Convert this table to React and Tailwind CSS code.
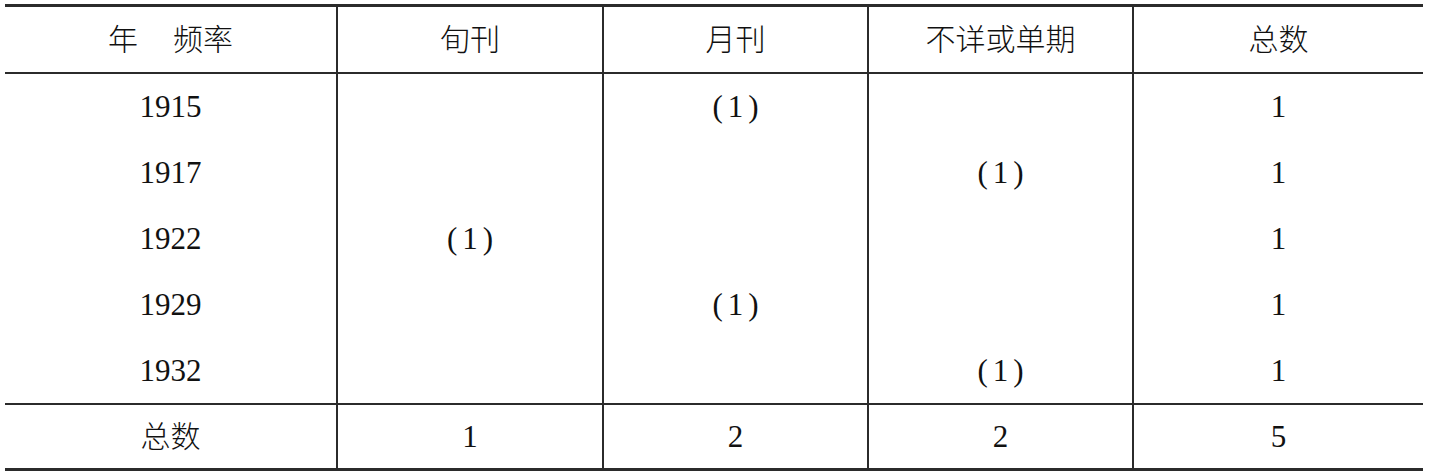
import React from 'react';

const COL_W = ['w-[331px]', 'w-[266px]', 'w-[265px]', 'w-[265px]', 'w-[291px]'];

const years = ['1915', '1917', '1922', '1929', '1932'];

// body cells per column (besides the year column)
const body = [
    ['', '', 'p', '', ''],
    ['p', '', '', 'p', ''],
    ['', 'p', '', '', 'p'],
    ['1', '1', '1', '1', '1'],
];

function Paren() {
    return (
        <span className="inline-flex items-center">
            <span>(</span>
            <span className="mx-[5px]">1</span>
            <span>)</span>
        </span>
    );
}

function Cell({ col, className = '', children }) {
    return (
        <div
            className={`${COL_W[col]} shrink-0 flex items-center justify-center ${col > 0 ? 'border-l-2 border-[#2b2b2b]' : ''} ${className}`}
        >
            {children}
        </div>
    );
}

export default function App() {
    return (
        <div
            className="w-[1430px] h-[476px] bg-white text-[#111] pt-[4px] pl-[5px]"
            style={{ fontFamily: '"Liberation Serif", "Noto Sans CJK SC", serif' }}
        >
            <div className="w-[1418px] border-t-[3px] border-b-[3px] border-[#2b2b2b] text-[31px] leading-none">
                {/* header */}
                <div className="flex h-[67px] border-b-2 border-[#2b2b2b] text-[30px] font-light">
                    <Cell col={0}>
                        <span>年</span>
                        <span className="w-[35px]" />
                        <span>频率</span>
                    </Cell>
                    <Cell col={1}>旬刊</Cell>
                    <Cell col={2}>月刊</Cell>
                    <Cell col={3}>不详或单期</Cell>
                    <Cell col={4}>总数</Cell>
                </div>

                {/* body */}
                <div className="flex h-[331px] border-b-2 border-[#2b2b2b]">
                    <div className={`${COL_W[0]} shrink-0 flex flex-col`}>
                        {years.map((y) => (
                            <div key={y} className="flex-1 flex items-center justify-center">{y}</div>
                        ))}
                    </div>
                    {body.map((col, ci) => (
                        <div
                            key={ci}
                            className={`${COL_W[ci + 1]} shrink-0 flex flex-col border-l-2 border-[#2b2b2b]`}
                        >
                            {col.map((v, ri) => (
                                <div key={ri} className="flex-1 flex items-center justify-center">
                                    {v === 'p' ? <Paren /> : v}
                                </div>
                            ))}
                        </div>
                    ))}
                </div>

                {/* totals */}
                <div className="flex h-[63px]">
                    <Cell col={0} className="text-[30px] font-light">总数</Cell>
                    <Cell col={1}>1</Cell>
                    <Cell col={2}>2</Cell>
                    <Cell col={3}>2</Cell>
                    <Cell col={4}>5</Cell>
                </div>
            </div>
        </div>
    );
}
